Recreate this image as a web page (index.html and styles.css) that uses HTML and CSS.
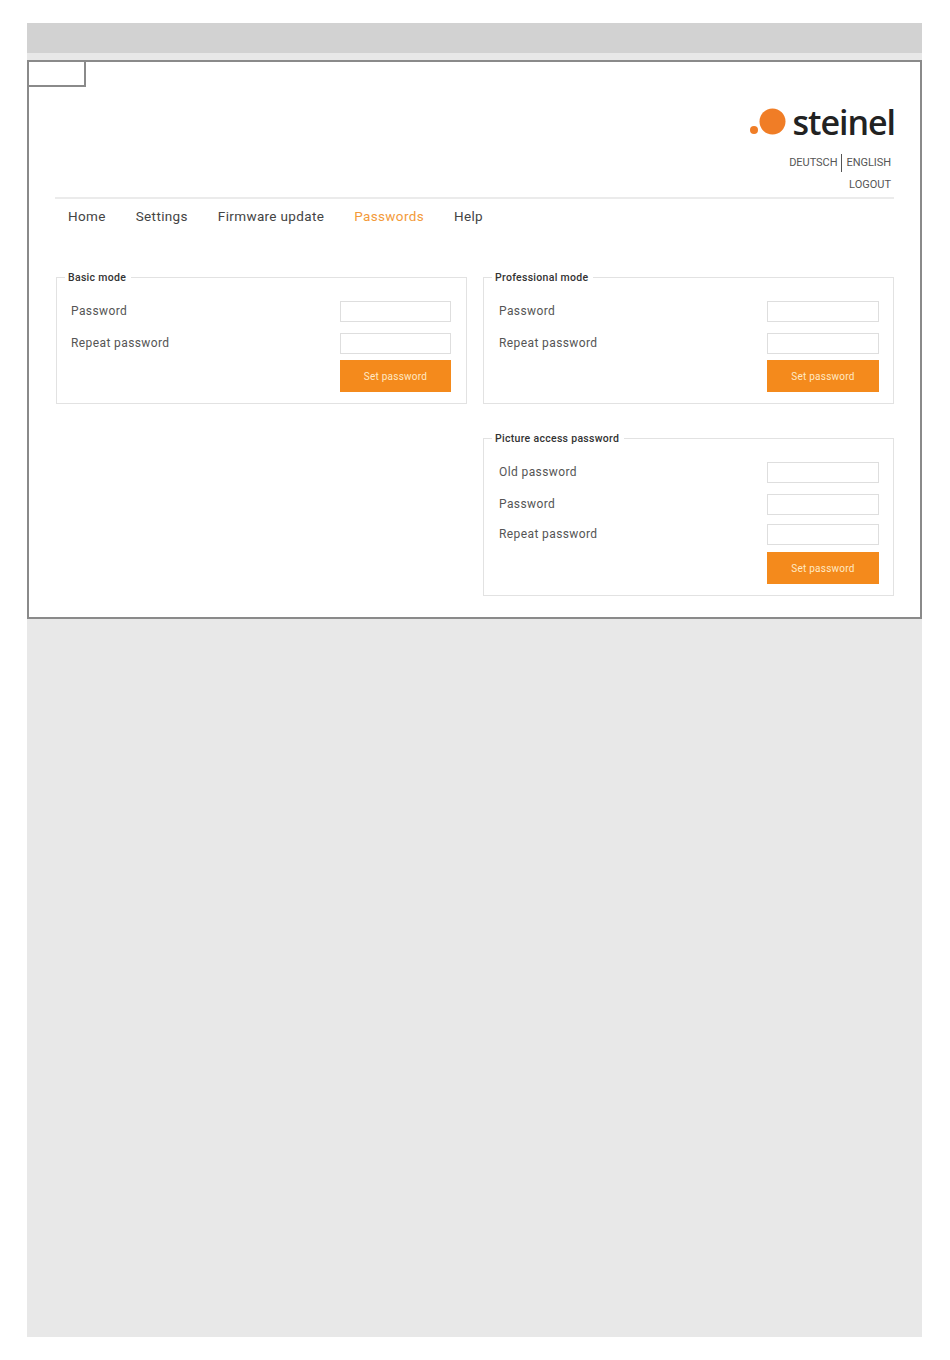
FILE: index.html
```html
<!DOCTYPE html>
<html lang="en">
<head>
<meta charset="utf-8">
<title>Passwords</title>
<link rel="stylesheet" href="styles.css">
</head>
<body>
<div class="sheet">
  <div class="topband"></div>
  <main class="frame">
    <div class="tab"></div>
    <header class="head">
      <div class="logo">
        <svg class="logo-mark" width="38" height="28" viewBox="0 0 38 28" aria-hidden="true">
          <circle cx="4" cy="22" r="4" fill="#f07d26"/>
          <circle cx="22.5" cy="13.5" r="13" fill="#f07d26"/>
        </svg>
        <span class="logo-text">steinel</span>
      </div>
      <div class="lang"><span>DEUTSCH</span><span class="sep"></span><span>ENGLISH</span></div>
      <div class="logout">LOGOUT</div>
    </header>
    <nav class="nav">
      <a>Home</a><a>Settings</a><a>Firmware update</a><a class="active">Passwords</a><a>Help</a>
    </nav>
    <div class="panels">
      <fieldset class="panel left">
        <legend>Basic mode</legend>
        <div class="row"><label>Password</label><span class="input"></span></div>
        <div class="row"><label>Repeat password</label><span class="input"></span></div>
        <div class="actions"><button class="btn">Set password</button></div>
      </fieldset>
      <fieldset class="panel right">
        <legend>Professional mode</legend>
        <div class="row"><label>Password</label><span class="input"></span></div>
        <div class="row"><label>Repeat password</label><span class="input"></span></div>
        <div class="actions"><button class="btn">Set password</button></div>
      </fieldset>
      <fieldset class="panel right triple">
        <legend>Picture access password</legend>
        <div class="row"><label>Old password</label><span class="input"></span></div>
        <div class="row"><label>Password</label><span class="input"></span></div>
        <div class="row tight"><label>Repeat password</label><span class="input"></span></div>
        <div class="actions"><button class="btn">Set password</button></div>
      </fieldset>
    </div>
  </main>
</div>
</body>
</html>
```
FILE: styles.css
```css
* { box-sizing: border-box; }
html, body { margin: 0; padding: 0; background: #fff; }
body {
  padding: 23px 28px 23px 27px;
  font-family: "Roboto", "Liberation Sans", sans-serif;
  color: #3c3c3c;
}
.sheet {
  height: 1314px;
  background: #e8e8e8;
  display: flex;
  flex-direction: column;
}
.topband { height: 30px; background: #d2d2d2; margin-bottom: 7px; }
.frame {
  height: 559px;
  background: #fff;
  border: 2px solid #8a8a8a;
  padding: 0 26px;
  position: relative;
}
.tab {
  position: absolute;
  left: 0;
  top: 0;
  width: 57px;
  height: 25px;
  border-right: 2px solid #8a8a8a;
  border-bottom: 2px solid #8a8a8a;
}
.head {
  height: 137px;
  border-bottom: 2px solid #ebebeb;
  display: flex;
  flex-direction: column;
  align-items: flex-end;
  padding-top: 43px;
}
.logo { display: flex; align-items: center; gap: 5px; height: 34px; margin-right: -1px; }
.logo-mark { display: block; }
.logo-text {
  font-family: "Open Sans", sans-serif;
  font-size: 34px;
  font-weight: 600;
  line-height: 34px;
  color: #222;
  letter-spacing: -1.05px;
}
.lang {
  display: flex;
  align-items: center;
  gap: 4px;
  font-size: 11px;
  line-height: 18px;
  letter-spacing: -0.05px;
  color: #555;
  margin-top: 15px;
  padding-right: 3px;
}
.sep { width: 1px; height: 18px; background: #555; }
.logout {
  font-size: 11px;
  line-height: 18px;
  color: #555;
  margin-top: 4px;
  padding-right: 3px;
}
.nav {
  display: flex;
  gap: 30px;
  padding: 8px 0 0 13px;
  height: 70px;
  font-size: 13.5px;
  line-height: 18px;
  letter-spacing: 0.35px;
  color: #444;
}
.active { color: #f39a3a; }
.panels {
  display: grid;
  grid-template-columns: 411px 411px;
  column-gap: 16px;
  row-gap: 26px;
  padding-left: 1px;
}
.panel {
  margin: 0;
  padding: 16px 15px 11px;
  border: 1px solid #e2e2e2;
  min-width: 0;
}
.triple { grid-column: 2; }
legend {
  font-size: 10.5px;
  line-height: 14px;
  font-weight: 500;
  letter-spacing: 0.3px;
  color: #333;
  padding: 2px 5px 0 3px;
  margin-left: -7px;
}
.row {
  display: flex;
  justify-content: space-between;
  align-items: center;
  height: 21px;
  margin-bottom: 11px;
  font-size: 12px;
  letter-spacing: 0.4px;
  color: #555;
}
.row label { margin-top: -2px; }
.left label { margin-left: -1px; }
.row.tight { margin-top: -2px; }
.input {
  width: 111px;
  height: 21px;
  border: 1px solid #dedede;
  background: #fff;
}
.actions { display: flex; justify-content: flex-end; margin-top: -5px; }
.triple .actions { margin-top: -4px; }
.btn {
  width: 111px;
  height: 32px;
  border: 0;
  padding: 0;
  background: #f48a1c;
  color: #ffe9c4;
  font-family: inherit;
  font-size: 10px;
  letter-spacing: 0.25px;
}
.right { padding-right: 14px; }
.right .input, .right .btn { width: 112px; }
```
